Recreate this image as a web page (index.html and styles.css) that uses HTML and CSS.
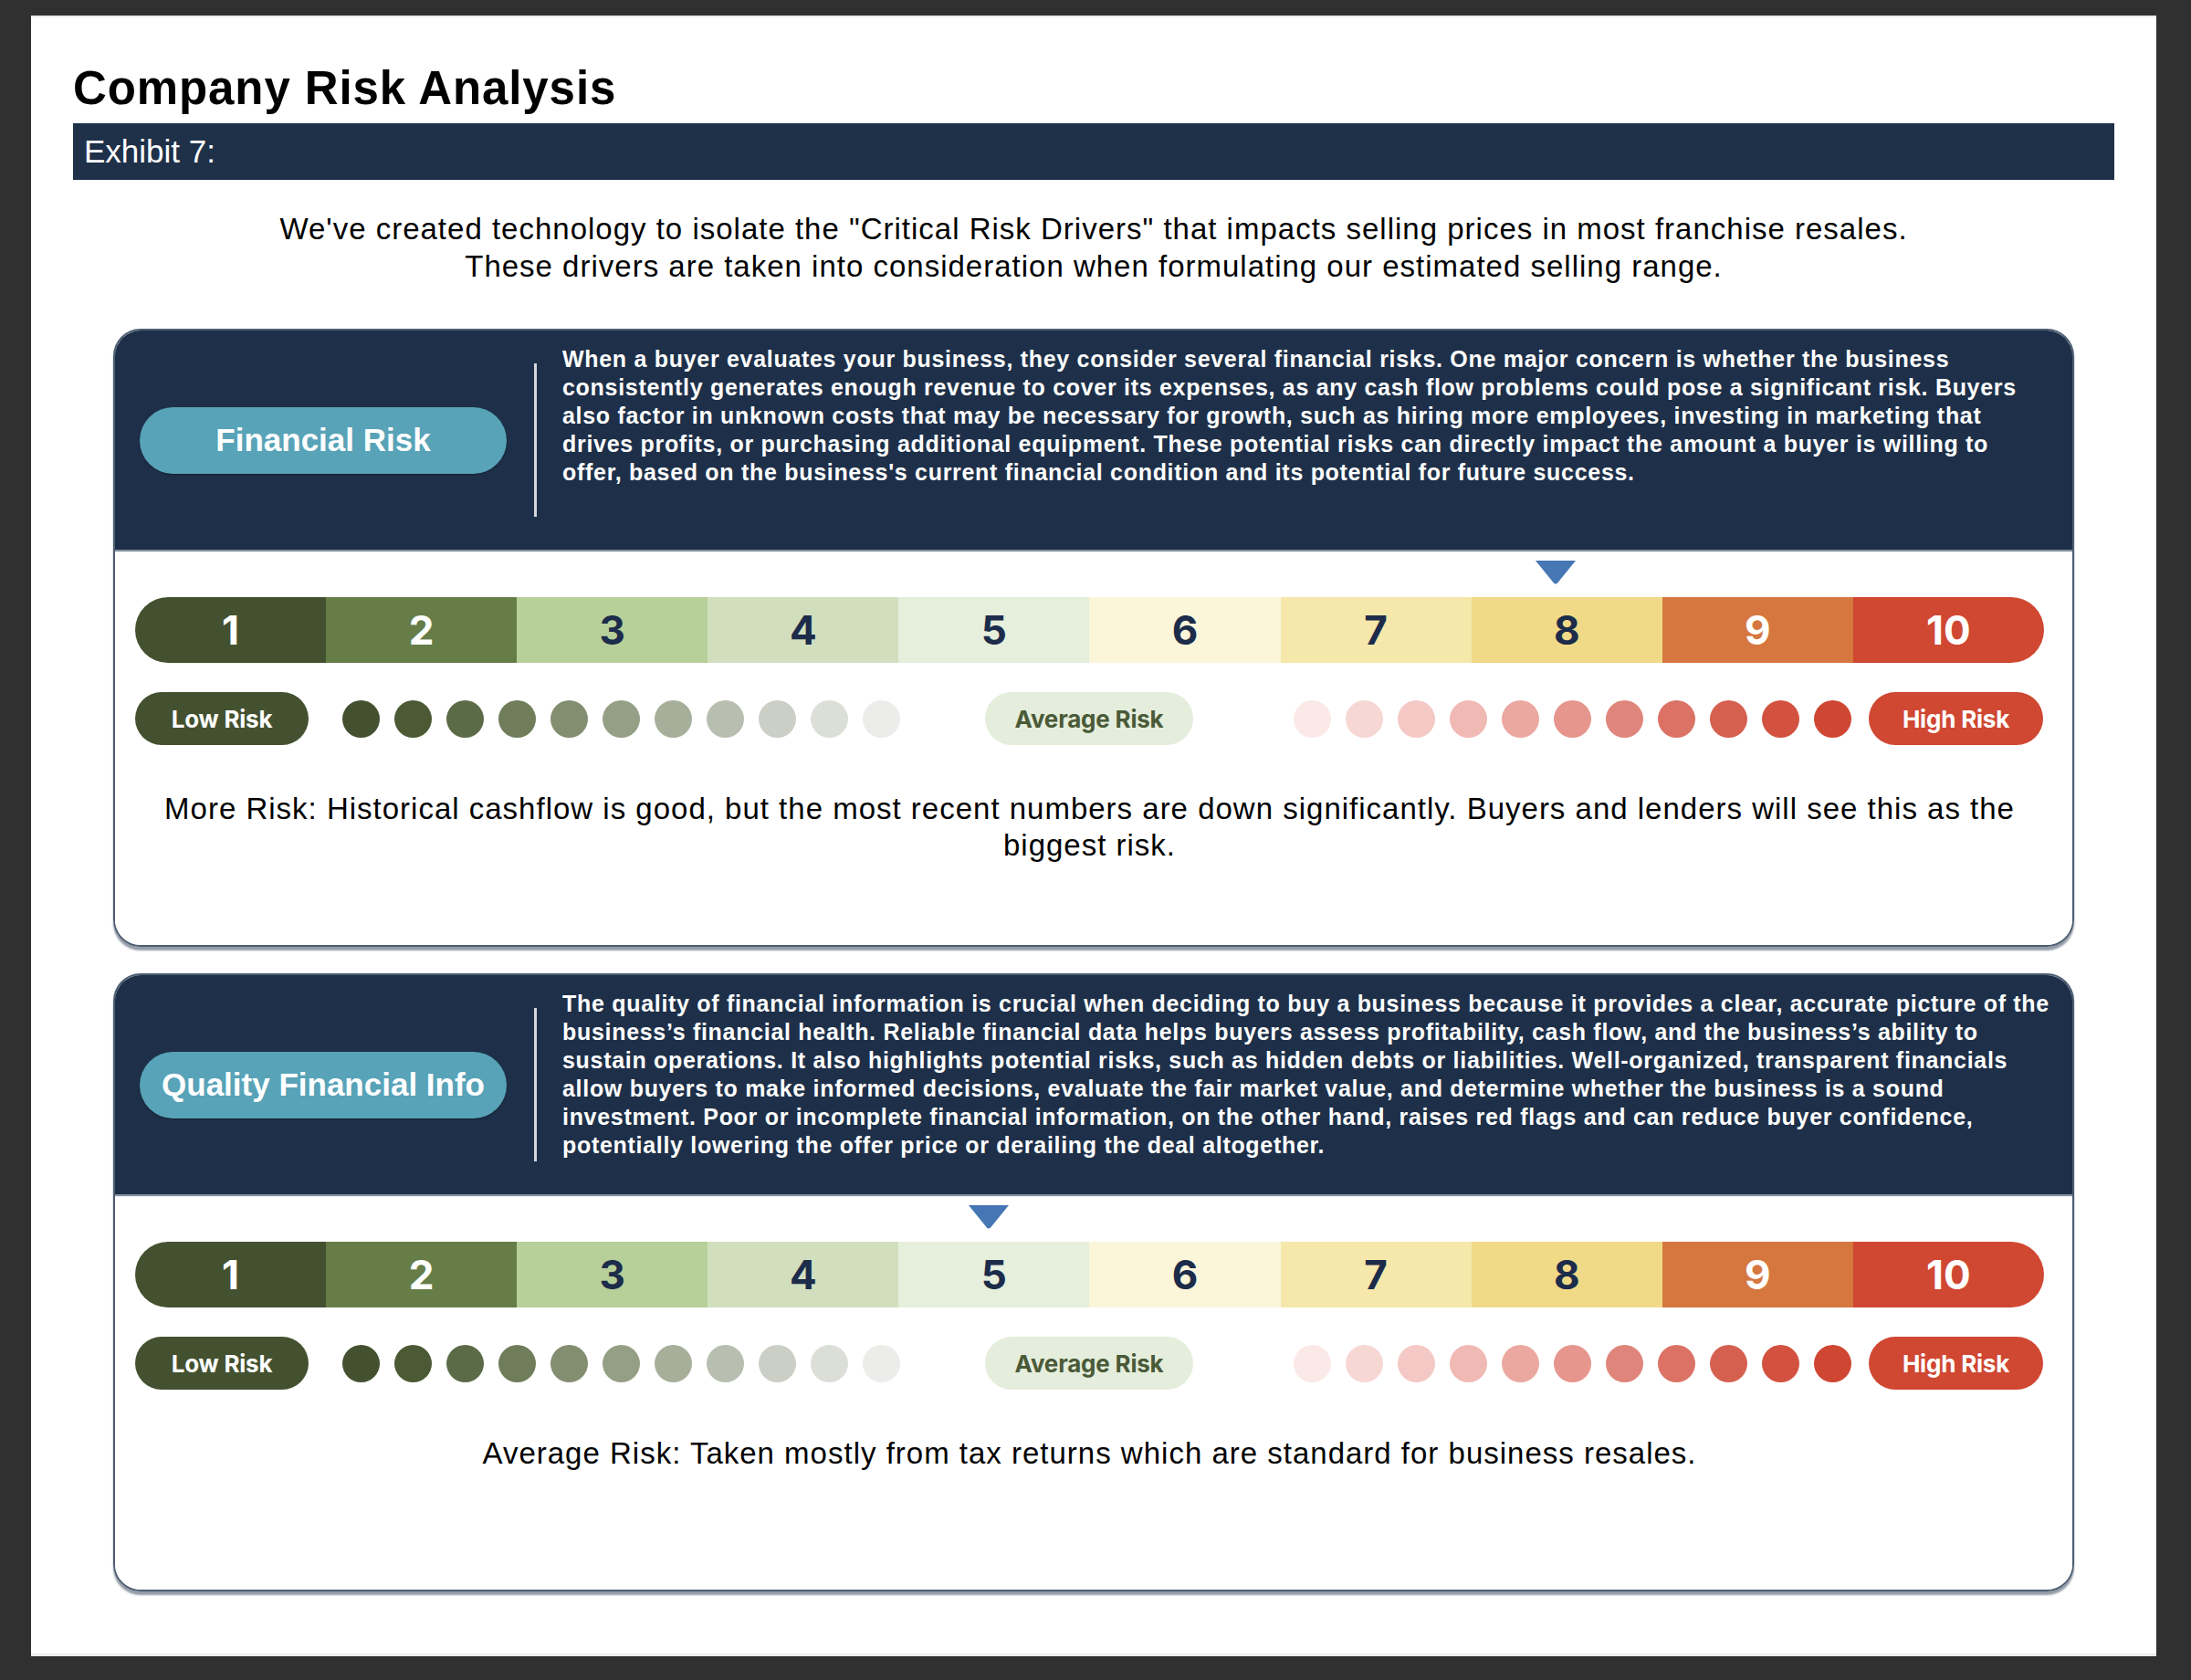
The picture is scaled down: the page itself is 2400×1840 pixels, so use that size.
FILE: index.html
```html
<!DOCTYPE html>
<html lang="en">
<head>
<meta charset="utf-8">
<title>Company Risk Analysis</title>
<link rel="stylesheet" href="styles.css">
</head>
<body>
<div class="page">
  <h1 class="title">Company Risk Analysis</h1>
  <div class="exhibit">Exhibit 7:</div>
  <p class="intro">We've created technology to isolate the "Critical Risk Drivers" that impacts selling prices in most franchise resales.<br>These drivers are taken into consideration when formulating our estimated selling range.</p>

  <section class="card">
    <div class="card-head">
      <div class="tag">Financial Risk</div>
      <div class="divider"></div>
      <p class="desc">When a buyer evaluates your business, they consider several financial risks. One major concern is whether the business consistently generates enough revenue to cover its expenses, as any cash flow problems could pose a significant risk. Buyers also factor in unknown costs that may be necessary for growth, such as hiring more employees, investing in marketing that drives profits, or purchasing additional equipment. These potential risks can directly impact the amount a buyer is willing to offer, based on the business's current financial condition and its potential for future success.</p>
    </div>
    <div class="card-body">
      <div class="marker-row">
        <svg class="marker" style="left:73.3%" width="46" height="26" viewBox="0 0 46 26"><path d="M1 0 H45 L25.5 24 Q23 27 20.5 24 Z" fill="#4677b4"/></svg>
      </div>
      <div class="scale">
        <div class="seg s1">1</div><div class="seg s2">2</div><div class="seg s3">3</div><div class="seg s4">4</div><div class="seg s5">5</div><div class="seg s6">6</div><div class="seg s7">7</div><div class="seg s8">8</div><div class="seg s9">9</div><div class="seg s10">10</div>
      </div>
      <div class="legend">
        <div class="pill low">Low Risk</div>
        <div class="dots green"><span></span><span></span><span></span><span></span><span></span><span></span><span></span><span></span><span></span><span></span><span></span></div>
        <div class="pill avg">Average Risk</div>
        <div class="dots red"><span></span><span></span><span></span><span></span><span></span><span></span><span></span><span></span><span></span><span></span><span></span></div>
        <div class="pill high">High Risk</div>
      </div>
      <p class="comment">More Risk: Historical cashflow is good, but the most recent numbers are down significantly. Buyers and lenders will see this as the biggest risk.</p>
    </div>
  </section>

  <section class="card">
    <div class="card-head">
      <div class="tag">Quality Financial Info</div>
      <div class="divider"></div>
      <p class="desc">The quality of financial information is crucial when deciding to buy a business because it provides a clear, accurate picture of the business’s financial health. Reliable financial data helps buyers assess profitability, cash flow, and the business’s ability to sustain operations. It also highlights potential risks, such as hidden debts or liabilities. Well-organized, transparent financials allow buyers to make informed decisions, evaluate the fair market value, and determine whether the business is a sound investment. Poor or incomplete financial information, on the other hand, raises red flags and can reduce buyer confidence, potentially lowering the offer price or derailing the deal altogether.</p>
    </div>
    <div class="card-body">
      <div class="marker-row">
        <svg class="marker" style="left:43.6%" width="46" height="26" viewBox="0 0 46 26"><path d="M1 0 H45 L25.5 24 Q23 27 20.5 24 Z" fill="#4677b4"/></svg>
      </div>
      <div class="scale">
        <div class="seg s1">1</div><div class="seg s2">2</div><div class="seg s3">3</div><div class="seg s4">4</div><div class="seg s5">5</div><div class="seg s6">6</div><div class="seg s7">7</div><div class="seg s8">8</div><div class="seg s9">9</div><div class="seg s10">10</div>
      </div>
      <div class="legend">
        <div class="pill low">Low Risk</div>
        <div class="dots green"><span></span><span></span><span></span><span></span><span></span><span></span><span></span><span></span><span></span><span></span><span></span></div>
        <div class="pill avg">Average Risk</div>
        <div class="dots red"><span></span><span></span><span></span><span></span><span></span><span></span><span></span><span></span><span></span><span></span><span></span></div>
        <div class="pill high">High Risk</div>
      </div>
      <p class="comment">Average Risk: Taken mostly from tax returns which are standard for business resales.</p>
    </div>
  </section>
</div>
</body>
</html>
```
FILE: styles.css
```css
html, body {
  margin: 0;
  padding: 0;
  background: #303030;
}
body {
  font-family: "Liberation Sans", Arial, sans-serif;
  color: #000;
  padding: 17px 38px 26px 34px;
}
.page {
  background: #fff;
  width: 2328px;
  min-height: 1797px;
  box-sizing: border-box;
  padding: 50px 46px 0 46px;
  border-top: 2px solid #ececec;
  border-bottom: 3px solid #ececec;
}
.title {
  margin: 0;
  font-size: 51px;
  line-height: 56px;
  font-weight: 700;
  letter-spacing: 0.9px;
}
.exhibit {
  margin-top: 10px;
  height: 62px;
  line-height: 62px;
  background: #1f3149;
  color: #fff;
  font-size: 35px;
  padding-left: 12px;
}
.intro {
  margin: 33px 0 0 0;
  text-align: center;
  font-size: 33px;
  line-height: 41px;
  letter-spacing: 1px;
}
.card {
  margin: 48px 44px 0 44px;
  height: 677px;
  box-sizing: border-box;
  border: 2px solid #4d5d72;
  border-radius: 30px;
  overflow: hidden;
  box-shadow: 0 4px 2px rgba(60, 75, 95, 0.55);
  display: flex;
  flex-direction: column;
}
.card + .card {
  margin-top: 29px;
}
.card-head {
  height: 240px;
  flex: none;
  background: #1e3049;
  display: flex;
  align-items: center;
  padding: 0 25px 0 27px;
  box-shadow: 0 2px 1px #8390a0;
  position: relative;
  z-index: 1;
}
.tag {
  flex: none;
  width: 402px;
  height: 73px;
  border-radius: 37px;
  background: #58a3b8;
  color: #fff;
  font-weight: 700;
  font-size: 35px;
  display: flex;
  align-items: center;
  justify-content: center;
  box-shadow: 0 1px 2px rgba(0, 0, 0, 0.35);
}
.divider {
  flex: none;
  width: 3px;
  height: 168px;
  background: #d3d7dc;
  margin-left: 30px;
}
.desc {
  align-self: flex-start;
  margin: 16px 0 0 28px;
  color: #fff;
  font-weight: 700;
  font-size: 25px;
  line-height: 31px;
  letter-spacing: 0.7px;
}
.card-body {
  flex: 1;
  background: #fff;
  padding: 12px 31px 0 22px;
}
.marker-row {
  position: relative;
  height: 26px;
  margin-bottom: 14px;
}
.marker {
  position: absolute;
  top: 0;
  display: block;
}
.scale {
  display: flex;
  height: 72px;
  border-radius: 36px;
  overflow: hidden;
}
.seg {
  flex: 1;
  display: flex;
  align-items: center;
  justify-content: center;
  font-family: Inter, "Liberation Sans", sans-serif;
  font-weight: 700;
  font-size: 44px;
  color: #1c2c4a;
}
.s1 { background: #445130; color: #fff; }
.s2 { background: #667d48; color: #fff; }
.s3 { background: #b7cf99; }
.s4 { background: #d2dfbf; }
.s5 { background: #e6eedc; }
.s6 { background: #fbf6da; }
.s7 { background: #f5e8aa; }
.s8 { background: #f0da87; }
.s9 { background: #d6773f; color: #fff; }
.s10 { background: #d04732; color: #fff; }
.legend {
  display: flex;
  align-items: center;
  height: 58px;
  margin-top: 32px;
}
.pill {
  flex: none;
  height: 58px;
  border-radius: 29px;
  display: flex;
  align-items: center;
  justify-content: center;
  font-family: Inter, "Liberation Sans", sans-serif;
  font-weight: 700;
  font-size: 26px;
  letter-spacing: -0.2px;
}
.low {
  width: 190px;
  background: #445130;
  color: #fff;
}
.avg {
  width: 228px;
  background: #e5eedc;
  color: #4a5a38;
  margin-left: 93px;
}
.high {
  width: 191px;
  background: #d04732;
  color: #fff;
  margin-left: 19px;
}
.dots {
  display: flex;
  gap: 16px;
}
.dots span {
  width: 41px;
  height: 41px;
  border-radius: 50%;
  display: block;
}
.green { margin-left: 37px; }
.red { margin-left: 110px; }
.green span:nth-child(1) { background: #445130; }
.green span:nth-child(2) { background: #4b5a34; }
.green span:nth-child(3) { background: #5c6b47; }
.green span:nth-child(4) { background: #6f7d5a; }
.green span:nth-child(5) { background: #838e71; }
.green span:nth-child(6) { background: #959f86; }
.green span:nth-child(7) { background: #a7af9b; }
.green span:nth-child(8) { background: #b9bfb0; }
.green span:nth-child(9) { background: #cbcfc5; }
.green span:nth-child(10) { background: #dcdfd8; }
.green span:nth-child(11) { background: #ecedea; }
.red span:nth-child(1) { background: #fbe9e8; }
.red span:nth-child(2) { background: #f7d7d4; }
.red span:nth-child(3) { background: #f4c9c5; }
.red span:nth-child(4) { background: #f0b9b3; }
.red span:nth-child(5) { background: #eba8a0; }
.red span:nth-child(6) { background: #e6968d; }
.red span:nth-child(7) { background: #e0857b; }
.red span:nth-child(8) { background: #db7265; }
.red span:nth-child(9) { background: #d66050; }
.red span:nth-child(10) { background: #d2523f; }
.red span:nth-child(11) { background: #cf4733; }
.comment {
  margin: 50px 0 0 0;
  text-align: center;
  font-size: 33px;
  line-height: 40px;
  letter-spacing: 1px;
}
```
